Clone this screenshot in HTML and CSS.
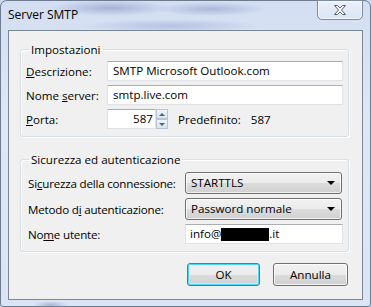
FILE: index.html
```html
<!DOCTYPE html>
<html lang="it">
<head>
  <meta charset="UTF-8" />
  <meta name="viewport" content="width=device-width, initial-scale=1.0"/>
  <title>Server SMTP</title>
  <link rel="stylesheet" href="styles.css">
</head>
<body>

  <div class="window">
    <div class="titlebar">
      <span class="title">Server SMTP</span>
      <button class="close" title="Chiudi">
        <svg width="14" height="12" viewBox="0 0 14 12">
          <path d="M1.5 1.5h3l2.5 2.6 2.5-2.6h3l-4 4.5 4 4.5h-3L7 7.9l-2.5 2.6h-3l4-4.5z" fill="#fff" stroke="#535d6d" stroke-width="1" stroke-linejoin="round"/>
        </svg>
      </button>
    </div>

    <div class="client">
      <fieldset class="group">
        <legend>Impostazioni</legend>
        <div class="row">
          <label class="label"><u>D</u>escrizione:</label>
          <div class="field">SMTP Microsoft Outlook.com</div>
        </div>
        <div class="row">
          <label class="label">Nome <u>s</u>erver:</label>
          <div class="field">smtp.live.com</div>
        </div>
        <div class="row">
          <label class="label"><u>P</u>orta:</label>
          <div class="spin">
            <div class="field number">587</div>
            <div class="arrows">
              <span class="arrow up"></span>
              <span class="arrow down"></span>
            </div>
          </div>
          <span class="default-label">Predefinito:</span>
          <span class="default-value">587</span>
        </div>
      </fieldset>

      <fieldset class="group security">
        <legend>Sicurezza ed autenticazione</legend>
        <div class="row tall">
          <label class="label wide">Si<u>c</u>urezza della connessione:</label>
          <div class="combo">STARTTLS<span class="caret"></span></div>
        </div>
        <div class="row tall">
          <label class="label wide">Metodo d<u>i</u> autenticazione:</label>
          <div class="combo">Password normale<span class="caret"></span></div>
        </div>
        <div class="row">
          <label class="label wide">No<u>m</u>e utente:</label>
          <div class="field user">info@<span class="redacted"></span>.it</div>
        </div>
      </fieldset>

      <div class="actions">
        <button class="btn default">OK</button>
        <button class="btn cancel">Annulla</button>
      </div>
    </div>
  </div>

</body>
</html>
```

FILE: styles.css
```css
html, body {
  margin: 0;
  height: 100%;
}

body {
  font-family: 'Open Sans', 'Noto Sans', sans-serif;
  font-size: 11.6px;
  color: #000;
  background: #c9d6ec;
  overflow: hidden;
}

.window {
  box-sizing: border-box;
  width: 371px;
  height: 307px;
  border: 1px solid #6f7c90;
  border-radius: 7px 7px 3px 3px;
  background:
    radial-gradient(ellipse 60px 8px at 110px 7px, rgba(110, 125, 180, 0.45), transparent),
    radial-gradient(ellipse 55px 7px at 210px 8px, rgba(110, 125, 180, 0.4), transparent),
    radial-gradient(ellipse 90px 7px at 170px 25px, rgba(120, 135, 190, 0.35), transparent),
    radial-gradient(ellipse 18px 4px at 50px 304px, rgba(110, 125, 190, 0.45), transparent),
    linear-gradient(#d3def2, #dde7f6 40%, #dae4f5);
  display: flex;
  flex-direction: column;
}

.titlebar {
  height: 29px;
  display: flex;
  align-items: flex-start;
  justify-content: space-between;
}

.title {
  margin: 6px 0 0 7px;
  font-size: 12px;
  line-height: 15px;
}

.close {
  width: 46px;
  height: 20px;
  margin: -1px 7px 0 0;
  padding: 0;
  border: 1px solid #7d8aa0;
  border-radius: 0 0 5px 5px;
  background: linear-gradient(rgba(255, 255, 255, 0.55), rgba(225, 233, 246, 0.5));
  box-shadow: inset 0 0 0 1px rgba(255, 255, 255, 0.6);
  display: flex;
  align-items: center;
  justify-content: center;
}

.client {
  flex: 1;
  margin: 0 7px 6px 7px;
  border: 1px solid #7b8797;
  background: #f0f0f0;
  padding: 11px 14px 0 11px;
}

.group {
  margin: 0;
  width: 329px;
  box-sizing: border-box;
  padding: 4px 5px 7px 5px;
  border: 1px solid #d5dfe5;
  border-radius: 3px;
  box-shadow: inset 1px 1px 0 #fff, 1px 1px 0 #fff;
  min-inline-size: 0;
}

.group legend {
  padding: 0 2px;
  margin-left: 3px;
  line-height: 15px;
}

.security {
  margin-top: 15px;
  padding-top: 5px;
}

.row {
  display: flex;
  align-items: center;
  height: 20px;
  white-space: nowrap;
}

.row + .row {
  margin-top: 4px;
}

.row.tall {
  height: 22px;
}

.label {
  width: 81px;
  flex: none;
  white-space: nowrap;
}

.label.wide {
  width: 157px;
  padding-left: 2px;
  letter-spacing: -0.2px;
}

.field {
  box-sizing: border-box;
  flex: 1;
  height: 20px;
  line-height: 18px;
  padding: 0 5px;
  background: #fff;
  border: 1px solid #dfe3e8;
  border-top-color: #abadb3;
  white-space: nowrap;
}

.field.user {
  display: flex;
  align-items: center;
  padding-left: 4px;
}

.redacted {
  display: inline-block;
  width: 48px;
  height: 13px;
  background: #000;
}

.spin {
  display: flex;
  width: 61px;
  flex: none;
}

.field.number {
  width: 49px;
  flex: none;
  text-align: right;
  padding-right: 2px;
}

.arrows {
  width: 12px;
  display: flex;
  flex-direction: column;
}

.arrow {
  box-sizing: border-box;
  height: 10px;
  border: 1px solid #b8c4d2;
  background: linear-gradient(#eef4fb, #d9e4f1);
  display: flex;
  align-items: center;
  justify-content: center;
}

.arrow::after {
  content: '';
  border-left: 3px solid transparent;
  border-right: 3px solid transparent;
}

.arrow.up::after {
  border-bottom: 3px solid #4d6185;
}

.arrow.down::after {
  border-top: 3px solid #4d6185;
}

.default-label {
  margin-left: 10px;
}

.default-value {
  margin-left: 10px;
}

.combo {
  box-sizing: border-box;
  width: 157px;
  height: 22px;
  flex: none;
  padding: 0 5px;
  line-height: 20px;
  border: 1px solid #707070;
  border-radius: 3px;
  background: linear-gradient(#f2f2f2, #ebebeb 50%, #dddddd 50%, #cfcfcf);
  box-shadow: inset 0 0 0 1px rgba(255, 255, 255, 0.7);
  display: flex;
  justify-content: space-between;
  align-items: center;
}

.caret {
  margin-right: 1px;
  border-left: 4px solid transparent;
  border-right: 4px solid transparent;
  border-top: 4px solid #000;
}

.actions {
  display: flex;
  justify-content: flex-end;
  gap: 13px;
  margin-top: 11px;
}

.btn {
  height: 23px;
  font: inherit;
  color: #000;
  padding: 0;
  border: 1px solid #707070;
  border-radius: 3px;
  background: linear-gradient(#f2f2f2, #ebebeb 50%, #dddddd 50%, #cfcfcf);
  box-shadow: inset 0 0 0 1px rgba(255, 255, 255, 0.75);
}

.btn.default {
  width: 73px;
  border-color: #3c7fb1;
  box-shadow: inset 0 0 0 1px #48d7fb, inset 0 0 0 2px rgba(255, 255, 255, 0.4);
}

.btn.cancel {
  width: 75px;
}
```
